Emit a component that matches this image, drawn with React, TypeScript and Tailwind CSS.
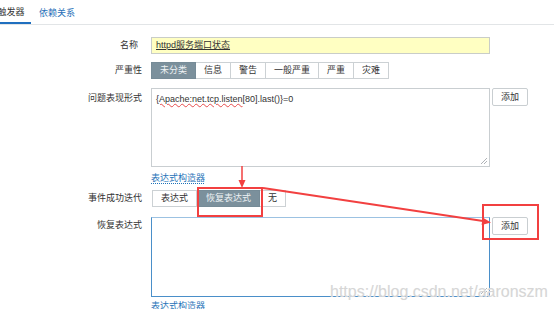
import React from 'react';

const severities = ['未分类', '信息', '警告', '一般严重', '严重', '灾难'];
const okEvents = ['表达式', '恢复表达式', '无'];

function Grip() {
    return (
        <svg className="absolute bottom-[1px] right-[1px]" width="8" height="8" viewBox="0 0 8 8">
            <line x1="7" y1="1" x2="1" y2="7" stroke="#9aa0a4" strokeWidth="0.8" />
            <line x1="7" y1="4" x2="4" y2="7" stroke="#9aa0a4" strokeWidth="0.8" />
        </svg>
    );
}

function AddButton() {
    return (
        <button className="ml-[2px] h-[18px] w-[36px] shrink-0 rounded-[2px] border border-[#c9ced1] bg-white text-[9px] text-[#333]">
            添加
        </button>
    );
}

function Segmented({ items, active }: { items: string[]; active: number }) {
    return (
        <div className="flex h-[17px]">
            {items.map((s, i) => (
                <div
                    key={s}
                    className={
                        i === active
                            ? 'flex items-center border border-[#768b97] bg-[#7b909c] px-[8px] text-[#eef2f4]'
                            : 'flex items-center border border-l-0 border-[#ccd1d4] bg-white px-[8px] text-[#333] first:border-l'
                    }
                >
                    {s}
                </div>
            ))}
        </div>
    );
}

export default function App() {
    return (
        <div className="relative h-[309px] w-[554px] overflow-hidden bg-white font-['Liberation_Sans','Noto_Sans_CJK_SC',sans-serif] text-[9px] leading-none text-[#333]">
            {/* tabs */}
            <div className="flex h-[25px] items-stretch border-b border-[#e2e5e7]">
                <div className="ml-[-9px] flex w-[40px] items-center justify-center border-b-2 border-[#1f6fbf] pt-[2px] text-[#333]">
                    触发器
                </div>
                <div className="ml-[8px] flex items-center pt-[2px] text-[#1f6fb8]">依赖关系</div>
            </div>

            {/* form */}
            <div className="flex flex-col">
                <div className="mt-[12px] flex items-center">
                    <div className="w-[142px] pr-[4px] text-right">名称</div>
                    <div className="ml-[9px] flex h-[17px] w-[339px] items-center border border-[#c9cdc8] bg-[#ffffc2] px-[4px]">
                        <span className="underline decoration-[#333]">httpd服务端口状态</span>
                    </div>
                </div>

                <div className="mt-[8px] flex items-center">
                    <div className="w-[142px] text-right">严重性</div>
                    <div className="ml-[9px]">
                        <Segmented items={severities} active={0} />
                    </div>
                </div>

                <div className="mt-[9px] flex items-start">
                    <div className="w-[142px] pt-[6px] text-right">问题表现形式</div>
                    <div className="relative ml-[9px] h-[79px] w-[339px] border border-[#c9ced1] bg-white px-[4px] pt-[6px]">
                        <span className="underline decoration-[#e64b4b] decoration-wavy decoration-[0.5px]">{'{Apache:net.tcp.listen'}</span>
                        <span>{'[80].last()}=0'}</span>
                        <Grip />
                    </div>
                    <AddButton />
                </div>

                <div className="ml-[151px] mt-[7px]">
                    <span className="text-[#1f73b8] underline decoration-dotted decoration-[#1f73b8] underline-offset-2">表达式构造器</span>
                </div>

                <div className="mt-[7px] flex items-center">
                    <div className="w-[142px] text-right">事件成功迭代</div>
                    <div className="ml-[10px]">
                        <Segmented items={okEvents} active={1} />
                    </div>
                </div>

                <div className="mt-[10px] flex items-start">
                    <div className="w-[142px] pt-[4px] text-right">恢复表达式</div>
                    <div className="relative ml-[9px] h-[80px] w-[339px] border border-[#4a8fc9] border-t-[#9cc2e2] bg-white">
                        <Grip />
                    </div>
                    <AddButton />
                </div>

                <div className="ml-[151px] mt-[5px]">
                    <span className="text-[#1f73b8] underline decoration-dotted decoration-[#1f73b8] underline-offset-2">表达式构造器</span>
                </div>
            </div>

            {/* annotations */}
            <div className="pointer-events-none absolute left-[197px] top-[187px] h-[30px] w-[66px] border-2 border-[#f24040]" />
            <div className="pointer-events-none absolute left-[482px] top-[204px] h-[36px] w-[57px] border-2 border-[#f24040]" />
            <svg className="pointer-events-none absolute left-0 top-0" width="554" height="309" viewBox="0 0 554 309">
                <line x1="242" y1="166" x2="242" y2="181" stroke="#f24040" strokeWidth="1.5" />
                <polygon points="238.5,180 245.5,180 242,188" fill="#f24040" />
                <line x1="263" y1="188" x2="483" y2="221" stroke="#f24040" strokeWidth="1.8" />
                <polygon points="482.6,217.5 481.6,225 491,222.5" fill="#f24040" />
            </svg>
            <div className="pointer-events-none absolute left-[330px] top-[284px] text-[16px] text-[#d6d6d6] [text-shadow:0_0_1px_#f4f4f4]">
                https://blog.csdn.net/aaronszm
            </div>
        </div>
    );
}
